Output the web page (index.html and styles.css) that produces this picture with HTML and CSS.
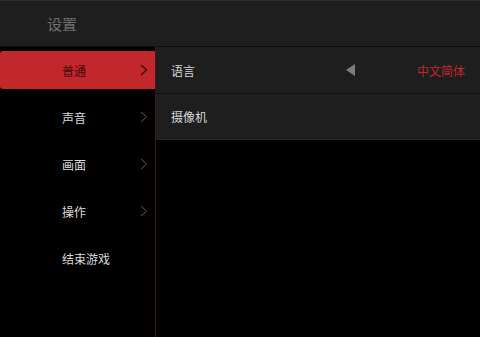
FILE: index.html
```html
<!DOCTYPE html>
<html>
<head>
    <meta charset="UTF-8" />
    <title>设置</title>
    <link rel="stylesheet" href="styles.css">
</head>
<body>
    <div class="header">
        <h1>设置</h1>
    </div>
    <div class="main">
        <div class="sidebar">
            <div class="menu-item active">
                <span>普通</span>
                <svg class="chevron" width="8" height="12" viewBox="0 0 8 12"><polyline points="1,1 6.5,6 1,11" /></svg>
            </div>
            <div class="menu-item">
                <span>声音</span>
                <svg class="chevron" width="8" height="12" viewBox="0 0 8 12"><polyline points="1,1 6.5,6 1,11" /></svg>
            </div>
            <div class="menu-item">
                <span>画面</span>
                <svg class="chevron" width="8" height="12" viewBox="0 0 8 12"><polyline points="1,1 6.5,6 1,11" /></svg>
            </div>
            <div class="menu-item">
                <span>操作</span>
                <svg class="chevron" width="8" height="12" viewBox="0 0 8 12"><polyline points="1,1 6.5,6 1,11" /></svg>
            </div>
            <div class="menu-item">
                <span>结束游戏</span>
            </div>
        </div>
        <div class="panel">
            <div class="row">
                <span class="label">语言</span>
                <div class="value">
                    <svg class="arrow" width="9" height="12" viewBox="0 0 9 12"><polygon points="9,0 9,12 0,6" /></svg>
                    <span class="selected">中文简体</span>
                </div>
            </div>
            <div class="row">
                <span class="label">摄像机</span>
            </div>
        </div>
    </div>
</body>
</html>
```

FILE: styles.css
```css
* {
    margin: 0;
    padding: 0;
    box-sizing: border-box;
    font-family: "Noto Sans CJK SC", "Noto Sans", sans-serif;
}

body {
    background: #000;
    width: 480px;
    height: 337px;
    overflow: hidden;
}

.header {
    height: 47px;
    background: #1e1e1e;
    border-top: 1px solid #2b2b2b;
    border-bottom: 1px solid #0e0e0e;
    display: flex;
    align-items: center;
    padding-left: 47px;
}

.header h1 {
    font-size: 15px;
    font-weight: normal;
    color: #6f6f6f;
}

.main {
    display: flex;
    height: 290px;
}

.sidebar {
    width: 156px;
    border-right: 1px solid #3e1a1d;
    display: flex;
    flex-direction: column;
    gap: 9px;
    padding-top: 4px;
}

.menu-item {
    height: 38px;
    display: flex;
    align-items: center;
    justify-content: space-between;
    padding: 0 7px 0 62px;
    font-size: 12px;
    color: #dcdcdc;
}

.menu-item.active {
    background: #c2272b;
    color: #3e0a0b;
    border-radius: 3px 0 0 3px;
}

.chevron polyline {
    fill: none;
    stroke: #5c5c5c;
    stroke-width: 1;
}

.menu-item.active .chevron polyline {
    stroke: #3e0a0b;
    stroke-width: 1.3;
}

.panel {
    flex: 1;
}

.row {
    height: 47px;
    background: #1e1e1e;
    border-bottom: 1px solid #121212;
    display: flex;
    align-items: center;
    justify-content: space-between;
    padding: 0 15px;
    font-size: 12px;
    color: #d6d6d6;
}

.row:last-child {
    height: 46px;
    border-bottom: 1px solid #262626;
}

.value {
    display: flex;
    align-items: center;
}

.arrow {
    margin-right: 62px;
}

.arrow polygon {
    fill: #7c7c7c;
}

.selected {
    color: #c2272b;
}
```
